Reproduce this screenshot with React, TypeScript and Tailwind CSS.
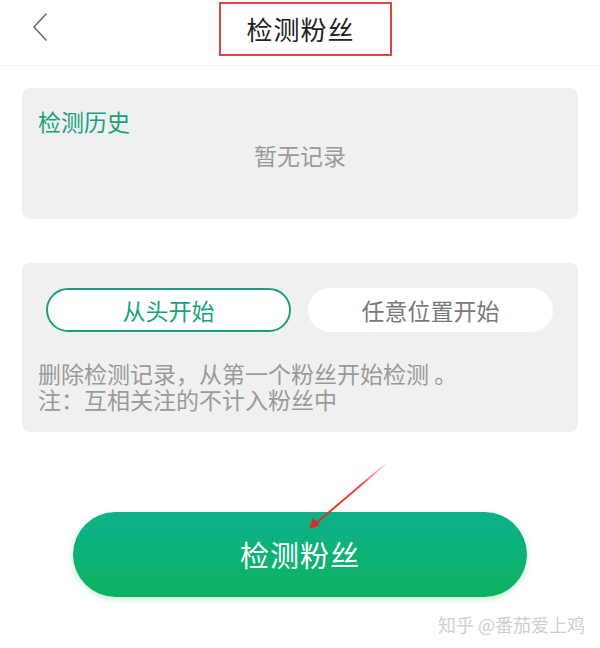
const font = { fontFamily: '"Noto Sans CJK SC", "Noto Sans", sans-serif' }

function BackArrow() {
  return (
    <svg width="20" height="30" viewBox="0 0 20 30" fill="none">
      <polyline points="15,2 3,15 15,28" stroke="#6b6b6b" strokeWidth="1.6" strokeLinecap="round" strokeLinejoin="round" />
    </svg>
  )
}

export default function App() {
  return (
    <div className="relative w-[600px] h-[648px] bg-white overflow-hidden" style={font}>
      {/* Header */}
      <header className="h-[66px] grid grid-cols-[1fr_auto_1fr] items-start border-b border-[#f2f2f2]">
        <div className="pl-[31px] pt-[12px]">
          <BackArrow />
        </div>
        <div className="ml-[11px] mt-[2px] h-[54px] w-[173px] border-2 border-[#e0453e] flex items-center justify-center pr-[10px]">
          <span className="text-[26px] leading-none text-[#222] tracking-[1px]">检测粉丝</span>
        </div>
        <div />
      </header>

      <main className="px-[22px]">
        {/* History card */}
        <section className="mt-[22px] h-[131px] rounded-[8px] bg-[#f0f0f0] px-[16px] pt-[20px]">
          <p className="text-[23px] leading-[26px] text-[#16a37c]">检测历史</p>
          <p className="mt-[8px] text-center text-[23px] leading-[26px] text-[#9a9a9a]">暂无记录</p>
        </section>

        {/* Mode card */}
        <section className="mt-[44px] h-[169px] rounded-[8px] bg-[#f0f0f0] px-[24px] pt-[25px]">
          <div className="flex gap-[17px]">
            <button className="h-[44px] w-[245px] rounded-full border-2 border-[#1f9e7f] bg-white text-[23px] text-[#16a37c]">
              从头开始
            </button>
            <button className="h-[44px] w-[245px] rounded-full bg-white text-[23px] text-[#7a7a7a]">
              任意位置开始
            </button>
          </div>
          <div className="mt-[28px] -ml-[8px] text-[23px] leading-[26px] text-[#9a9a9a]">
            <p>删除检测记录，从第一个粉丝开始检测 。</p>
            <p>注：互相关注的不计入粉丝中</p>
          </div>
        </section>
      </main>

      {/* Primary action */}
      <div className="mt-[80px] flex justify-center">
        <button className="h-[85px] w-[454px] rounded-full bg-gradient-to-b from-[#0fb08a] to-[#0db35e] shadow-[0_2px_6px_rgba(16,160,100,0.25)] text-[29px] text-white tracking-[1px]">
          检测粉丝
        </button>
      </div>

      <p className="mt-[16px] pr-[15px] text-right text-[18px] leading-[22px] text-[#cfcfcf]">知乎 @番茄爱上鸡</p>

      {/* Annotation arrow */}
      <svg className="absolute left-0 top-0 pointer-events-none" width="600" height="648">
        <defs>
          <linearGradient id="arrowFade" x1="388" y1="462" x2="310" y2="528" gradientUnits="userSpaceOnUse">
            <stop offset="0" stopColor="#e03a34" stopOpacity="0" />
            <stop offset="0.35" stopColor="#e03a34" stopOpacity="0.9" />
            <stop offset="1" stopColor="#d92c26" />
          </linearGradient>
        </defs>
        <line x1="388" y1="462" x2="314" y2="525" stroke="url(#arrowFade)" strokeWidth="2" />
        <polygon points="309,529 313,518 320,525" fill="#d92c26" />
      </svg>
    </div>
  )
}
